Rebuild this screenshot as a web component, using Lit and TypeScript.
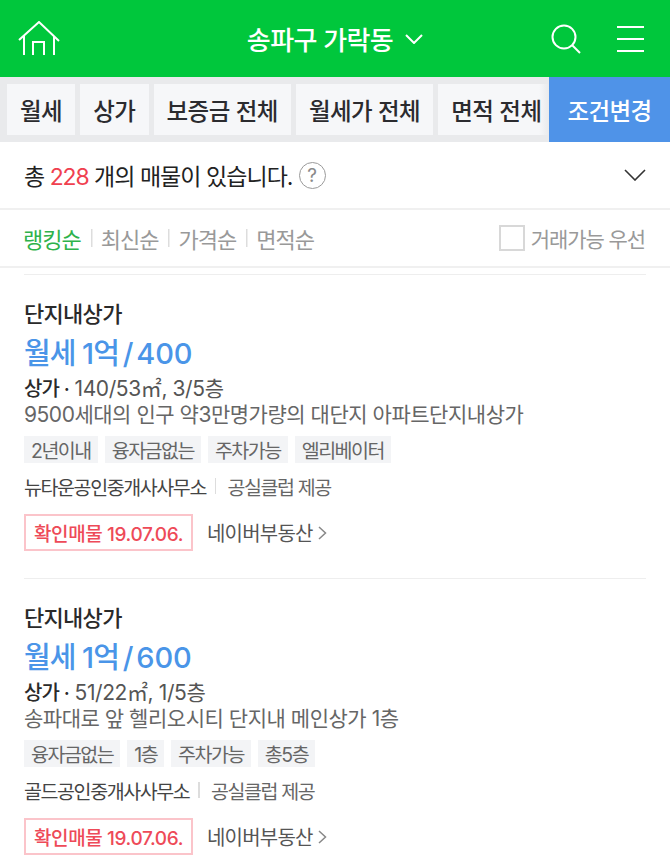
import { css, html, LitElement } from "lit";
import { customElement } from "lit/decorators.js";

interface Listing {
    title: string;
    deal: string;
    rent: string;
    spec: string;
    desc: string;
    tags: string[];
    agent: string;
    date: string;
}

const LISTINGS: Listing[] = [
    {
        title: "단지내상가",
        deal: "월세 1억",
        rent: "400",
        spec: "140/53㎡, 3/5층",
        desc: "9500세대의 인구 약3만명가량의 대단지 아파트단지내상가",
        tags: ["2년이내", "융자금없는", "주차가능", "엘리베이터"],
        agent: "뉴타운공인중개사사무소",
        date: "19.07.06.",
    },
    {
        title: "단지내상가",
        deal: "월세 1억",
        rent: "600",
        spec: "51/22㎡, 1/5층",
        desc: "송파대로 앞 헬리오시티 단지내 메인상가 1층",
        tags: ["융자금없는", "1층", "주차가능", "총5층"],
        agent: "골드공인중개사사무소",
        date: "19.07.06.",
    },
];

const FILTERS = ["월세", "상가", "보증금 전체", "월세가 전체", "면적 전체"];
const SORTS = ["랭킹순", "최신순", "가격순", "면적순"];

@customElement("app-root")
export class AppRoot extends LitElement {
    static override styles = css`
    :host {
      display: block;
      width: 670px;
      height: 864px;
      overflow: hidden;
      background: #fff;
      color: #222;
      font-family: Inter, "Noto Sans CJK KR", sans-serif;
    }
    .header {
      height: 77px;
      background: #00c73c;
      display: flex;
      align-items: center;
      justify-content: space-between;
      padding: 0 26px 0 18px;
      box-sizing: border-box;
      color: #fff;
    }
    .header svg {
      display: block;
      fill: none;
      stroke: #fff;
      stroke-width: 2;
    }
    .place {
      display: flex;
      align-items: center;
      gap: 12px;
      font-size: 26px;
      font-weight: 500;
      letter-spacing: -0.6px;
      margin-left: 59px;
    }
    .actions {
      display: flex;
      align-items: center;
      gap: 36px;
    }
    .filters {
      position: relative;
      height: 65px;
      display: flex;
      background: #e9eaec;
    }
    .chips {
      flex: 1;
      min-width: 0;
      display: flex;
      gap: 5px;
      padding: 7px 0 7px 7px;
      box-sizing: border-box;
      overflow: hidden;
    }
    .chip {
      flex: none;
      height: 51px;
      padding: 0 13px;
      display: flex;
      align-items: center;
      background: #f6f7f9;
      font-size: 23.5px;
      font-weight: 500;
      letter-spacing: -0.5px;
      color: #2b2b2f;
    }
    .fade {
      position: absolute;
      top: 0;
      bottom: 0;
      right: 121px;
      width: 10px;
      background: linear-gradient(to right, rgba(233, 234, 236, 0), #e9eaec);
    }
    .change {
      flex: none;
      width: 121px;
      display: flex;
      align-items: center;
      justify-content: center;
      background: #4f93e8;
      color: #fff;
      font-size: 23.5px;
      font-weight: 500;
      letter-spacing: -0.6px;
    }
    .summary {
      height: 68px;
      display: flex;
      align-items: center;
      justify-content: space-between;
      padding: 0 24px;
      border-bottom: 2px solid #f0f0f0;
      box-sizing: border-box;
    }
    .count {
      display: flex;
      align-items: center;
      gap: 6px;
      font-size: 23px;
      letter-spacing: -0.95px;
      color: #222;
    }
    .count b {
      font-weight: 400;
      letter-spacing: -1.2px;
      color: #f0404f;
    }
    .help {
      width: 27px;
      height: 27px;
      border: 1.5px solid #9a9a9a;
      border-radius: 50%;
      box-sizing: border-box;
      display: flex;
      align-items: center;
      justify-content: center;
      font-size: 19px;
      letter-spacing: 0;
      color: #8a8a8a;
    }
    .sorts {
      height: 58px;
      display: flex;
      align-items: center;
      justify-content: space-between;
      padding: 0 25px 0 23px;
      border-bottom: 2px solid #f0f0f0;
      box-sizing: border-box;
    }
    .sort-list {
      display: flex;
      align-items: center;
      font-size: 22px;
      letter-spacing: -1px;
      color: #999;
    }
    .sort-list span + span {
      margin-left: 10px;
      padding-left: 10px;
      background: linear-gradient(#ddd, #ddd) left center / 1.5px 18px no-repeat;
    }
    .sort-list .on {
      color: #2eb24b;
    }
    .trade {
      display: flex;
      align-items: center;
      gap: 6px;
      font-size: 21px;
      letter-spacing: -1.1px;
      color: #999;
    }
    .check {
      width: 26px;
      height: 26px;
      border: 2px solid #d8d8d8;
      box-sizing: border-box;
    }
    .list {
      padding: 6px 24px 0;
    }
    .card {
      border-top: 1.5px solid #eeeeee;
      height: 304px;
      box-sizing: border-box;
      padding-top: 24px;
    }
    .title {
      font-size: 22px;
      font-weight: 500;
      line-height: 30px;
      letter-spacing: -0.7px;
      color: #2a2a2a;
    }
    .price {
      font-size: 29px;
      font-weight: 500;
      line-height: 44px;
      letter-spacing: -0.2px;
      color: #4a95e8;
      margin-top: 3px;
      margin-bottom: -3px;
    }
    .price .deal {
      letter-spacing: -1px;
    }
    .price .slash {
      margin: 0 3px 0 4px;
    }
    .spec {
      font-size: 21px;
      line-height: 25px;
      letter-spacing: -0.4px;
      color: #555;
      margin-top: 3px;
    }
    .spec b {
      font-size: 20px;
      font-weight: 500;
      letter-spacing: -0.8px;
      color: #2a2a2a;
    }
    .desc {
      font-size: 21px;
      line-height: 25px;
      letter-spacing: -0.47px;
      color: #666;
    }
    .tags {
      display: flex;
      gap: 7px;
      margin-top: 9px;
    }
    .tag {
      height: 27px;
      padding: 0 7px;
      display: flex;
      align-items: center;
      background: #f3f4f6;
      font-size: 19.5px;
      letter-spacing: -1.5px;
      color: #666;
    }
    .agent {
      display: flex;
      align-items: center;
      margin-top: 8px;
      height: 30px;
      font-size: 19.5px;
      letter-spacing: -1.4px;
      color: #444;
    }
    .agent i {
      width: 1.5px;
      height: 16px;
      margin: 0 11px 0 9px;
      background: #ddd;
    }
    .agent span:last-child {
      color: #666;
    }
    .source {
      display: flex;
      align-items: center;
      gap: 14px;
      margin-top: 13px;
    }
    .verified {
      height: 37px;
      padding: 0 8px;
      display: flex;
      align-items: center;
      border: 2px solid #fbc4ca;
      box-sizing: border-box;
      font-size: 19px;
      font-weight: 500;
      letter-spacing: -0.4px;
      color: #ee4a58;
    }
    .naver {
      display: flex;
      align-items: center;
      gap: 5px;
      font-size: 20px;
      letter-spacing: -0.8px;
      color: #555;
    }
    .naver svg {
      fill: none;
      stroke: #888;
      stroke-width: 1.5;
    }
  `;

    private _renderCard(item: Listing) {
        return html`
      <article class="card">
        <div class="title">${item.title}</div>
        <div class="price"><span class="deal">${item.deal}</span><span class="slash">/</span>${item.rent}</div>
        <div class="spec"><b>상가 ·</b> ${item.spec}</div>
        <div class="desc">${item.desc}</div>
        <div class="tags">${item.tags.map((t) => html`<span class="tag">${t}</span>`)}</div>
        <div class="agent"><span>${item.agent}</span><i></i><span>공실클럽 제공</span></div>
        <div class="source">
          <span class="verified">확인매물 ${item.date}</span>
          <span class="naver">네이버부동산
            <svg width="9" height="16" viewBox="0 0 9 16"><path d="M1 2l6.5 6L1 14" /></svg>
          </span>
        </div>
      </article>
    `;
    }

    override render() {
        return html`
      <header class="header">
        <svg width="42" height="36" viewBox="0 0 42 36">
          <path d="M1 19L21 1l20 19" />
          <path d="M6 15v19M36 15v19" />
          <path d="M15 34V21h11v13" />
        </svg>
        <div class="place">
          송파구 가락동
          <svg width="18" height="10" viewBox="0 0 18 10"><path d="M1 1l8 8 8-8" /></svg>
        </div>
        <div class="actions">
          <svg width="30" height="30" viewBox="0 0 30 30">
            <circle cx="13" cy="13" r="11.5" />
            <path d="M21 21l8 8" />
          </svg>
          <svg width="27" height="26" viewBox="0 0 27 26">
            <path d="M0 1h27M0 13h27M0 25h27" />
          </svg>
        </div>
      </header>
      <div class="filters">
        <div class="chips">${FILTERS.map((f) => html`<span class="chip">${f}</span>`)}</div>
        <div class="fade"></div>
        <div class="change">조건변경</div>
      </div>
      <div class="summary">
        <div class="count">
          <span>총 <b>228</b> 개의 매물이 있습니다.</span>
          <span class="help">?</span>
        </div>
        <svg width="22" height="12" viewBox="0 0 22 12" fill="none" stroke="#333" stroke-width="1.6">
          <path d="M1 1l10 10L21 1" />
        </svg>
      </div>
      <div class="sorts">
        <div class="sort-list">
          ${SORTS.map((s, i) => html`<span class=${i === 0 ? "on" : ""}>${s}</span>`)}
        </div>
        <div class="trade"><span class="check"></span>거래가능 우선</div>
      </div>
      <div class="list">${LISTINGS.map((item) => this._renderCard(item))}</div>
    `;
    }
}
